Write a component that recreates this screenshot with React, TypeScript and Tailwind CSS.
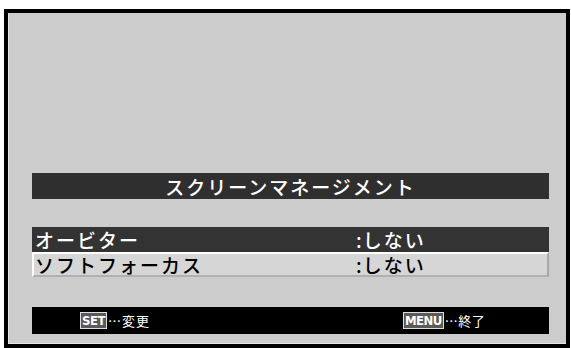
import React from "react";

const jp = { fontFamily: '"Noto Sans CJK JP", "Noto Sans", sans-serif' };
const keyFont = { fontFamily: '"DejaVu Sans Condensed", "Liberation Sans Narrow", sans-serif' };

export default function App() {
  return (
    <div className="w-[571px] h-[348px] bg-white overflow-hidden" style={jp}>
      <div className="ml-[4px] mt-[9px] w-[566px] h-[339px] border-[4px] border-black bg-[#cccccc] flex flex-col">
        <div className="flex-1 flex flex-col border-l border-b border-[#e6e6e6] pl-[23px] pr-[17px] pt-[160px]">
          <div className="h-[26px] bg-[#2f2f2f] flex items-center justify-center text-white text-[19px] tracking-[2px] font-medium leading-none">
            スクリーンマネージメント
          </div>
          <div className="mt-[28px] h-[25px] bg-[#333333] flex items-center text-white text-[19px] tracking-[2px] font-medium leading-none">
            <span className="pl-[3px] w-[324px]">オービター</span>
            <span><span className="tracking-normal mr-[1px]">:</span>しない</span>
          </div>
          <div className="h-[25px] bg-[#d6d6d6] border-t-2 border-l-2 border-white border-r-2 border-b-2 border-r-[#a8a8a8] border-b-[#b0b0b0] flex items-center text-black text-[19px] tracking-[2px] font-medium leading-none">
            <span className="pl-[1px] w-[322px]">ソフトフォーカス</span>
            <span><span className="tracking-normal mr-[1px]">:</span>しない</span>
          </div>
          <div className="mt-[30px] h-[27px] bg-black flex items-center text-white text-[13px] leading-none">
            <div className="ml-[48px] flex items-center">
              <span className="border border-[#dddddd] bg-[#5a5a5a] px-[1px] h-[17px] flex items-center font-bold text-[13px] tracking-[-0.5px]" style={keyFont}>SET</span>
              <span className="ml-[1px] tracking-[1px]">…変更</span>
            </div>
            <div className="ml-[253px] flex items-center">
              <span className="border border-[#dddddd] bg-[#5a5a5a] px-[1px] h-[17px] flex items-center font-bold text-[13px] tracking-[-0.5px]" style={keyFont}>MENU</span>
              <span className="ml-[1px] tracking-[0.5px]">…終了</span>
            </div>
          </div>
        </div>
      </div>
    </div>
  );
}
